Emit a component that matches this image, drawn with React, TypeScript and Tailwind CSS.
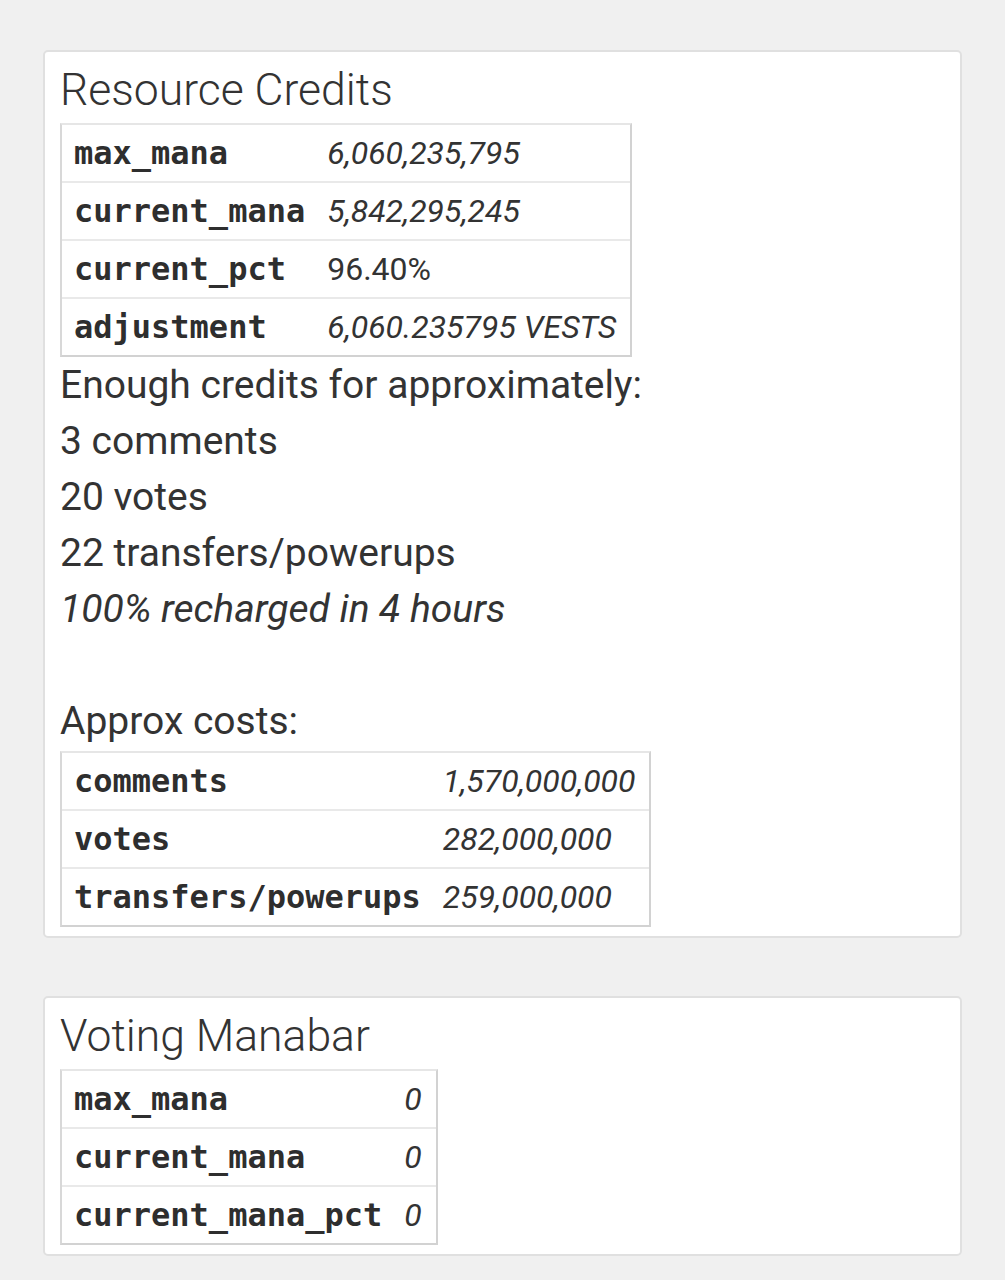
import React from "react";

type Row = [string, string, boolean?];

function KVTable({ rows, keyPr = "pr-[10px]" }: { rows: Row[]; keyPr?: string }) {
  return (
    <table className="border-separate border-spacing-0 border-2 border-[#d2d2d2] border-t-[#e6e6e6] border-l-[#d8d8d8]">
      <tbody>
        {rows.map(([k, v, plain], i) => (
          <tr key={k}>
            <td
              className={`pl-[12px] ${keyPr} py-2 leading-[40px] text-[32px] font-bold text-[#2e2e2e] whitespace-nowrap ${
                i > 0 ? "border-t-2 border-[#e9e9e9]" : ""
              }`}
              style={{ fontFamily: '"DejaVu Sans Mono", monospace' }}
            >
              {k}
            </td>
            <td
              className={`pl-[12px] pr-[14px] py-2 leading-[40px] text-[32px] text-[#333] whitespace-nowrap ${
                plain ? "" : "italic"
              } ${i > 0 ? "border-t-2 border-[#e9e9e9]" : ""}`}
            >
              {v}
            </td>
          </tr>
        ))}
      </tbody>
    </table>
  );
}

export default function App() {
  return (
    <div
      className="min-h-[1280px] bg-[#f0f0f0] pt-[50px] pl-[43px] pr-[43px] text-[#333]"
      style={{ fontFamily: 'Roboto, "Liberation Sans", sans-serif' }}
    >
      <div className="w-[919px] rounded-[5px] border-2 border-[#e0e0e0] bg-white px-[15px] pt-[12px] pb-[9px]">
        <h3 className="mb-[7px] text-[44.5px] font-light leading-[52px] text-[#333]">Resource Credits</h3>
        <KVTable
          rows={[
            ["max_mana", "6,060,235,795"],
            ["current_mana", "5,842,295,245"],
            ["current_pct", "96.40%", true],
            ["adjustment", "6,060.235795 VESTS"],
          ]}
        />
        <div className="text-[39px] leading-[56px]">
          <div>Enough credits for approximately:</div>
          <div>3 comments</div>
          <div>20 votes</div>
          <div>22 transfers/powerups</div>
          <div className="italic">100% recharged in 4 hours</div>
          <div className="h-[56px]" />
          <div className="mb-[2px]">Approx costs:</div>
        </div>
        <KVTable
          rows={[
            ["comments", "1,570,000,000"],
            ["votes", "282,000,000"],
            ["transfers/powerups", "259,000,000"],
          ]}
        />
      </div>

      <div className="mt-[58px] w-[919px] rounded-[5px] border-2 border-[#e0e0e0] bg-white px-[15px] pt-[12px] pb-[9px]">
        <h3 className="mb-[7px] text-[44.5px] font-light leading-[52px] text-[#333]">Voting Manabar</h3>
        <KVTable
          rows={[
            ["max_mana", "0"],
            ["current_mana", "0"],
            ["current_mana_pct", "0"],
          ]}
        />
      </div>
    </div>
  );
}
